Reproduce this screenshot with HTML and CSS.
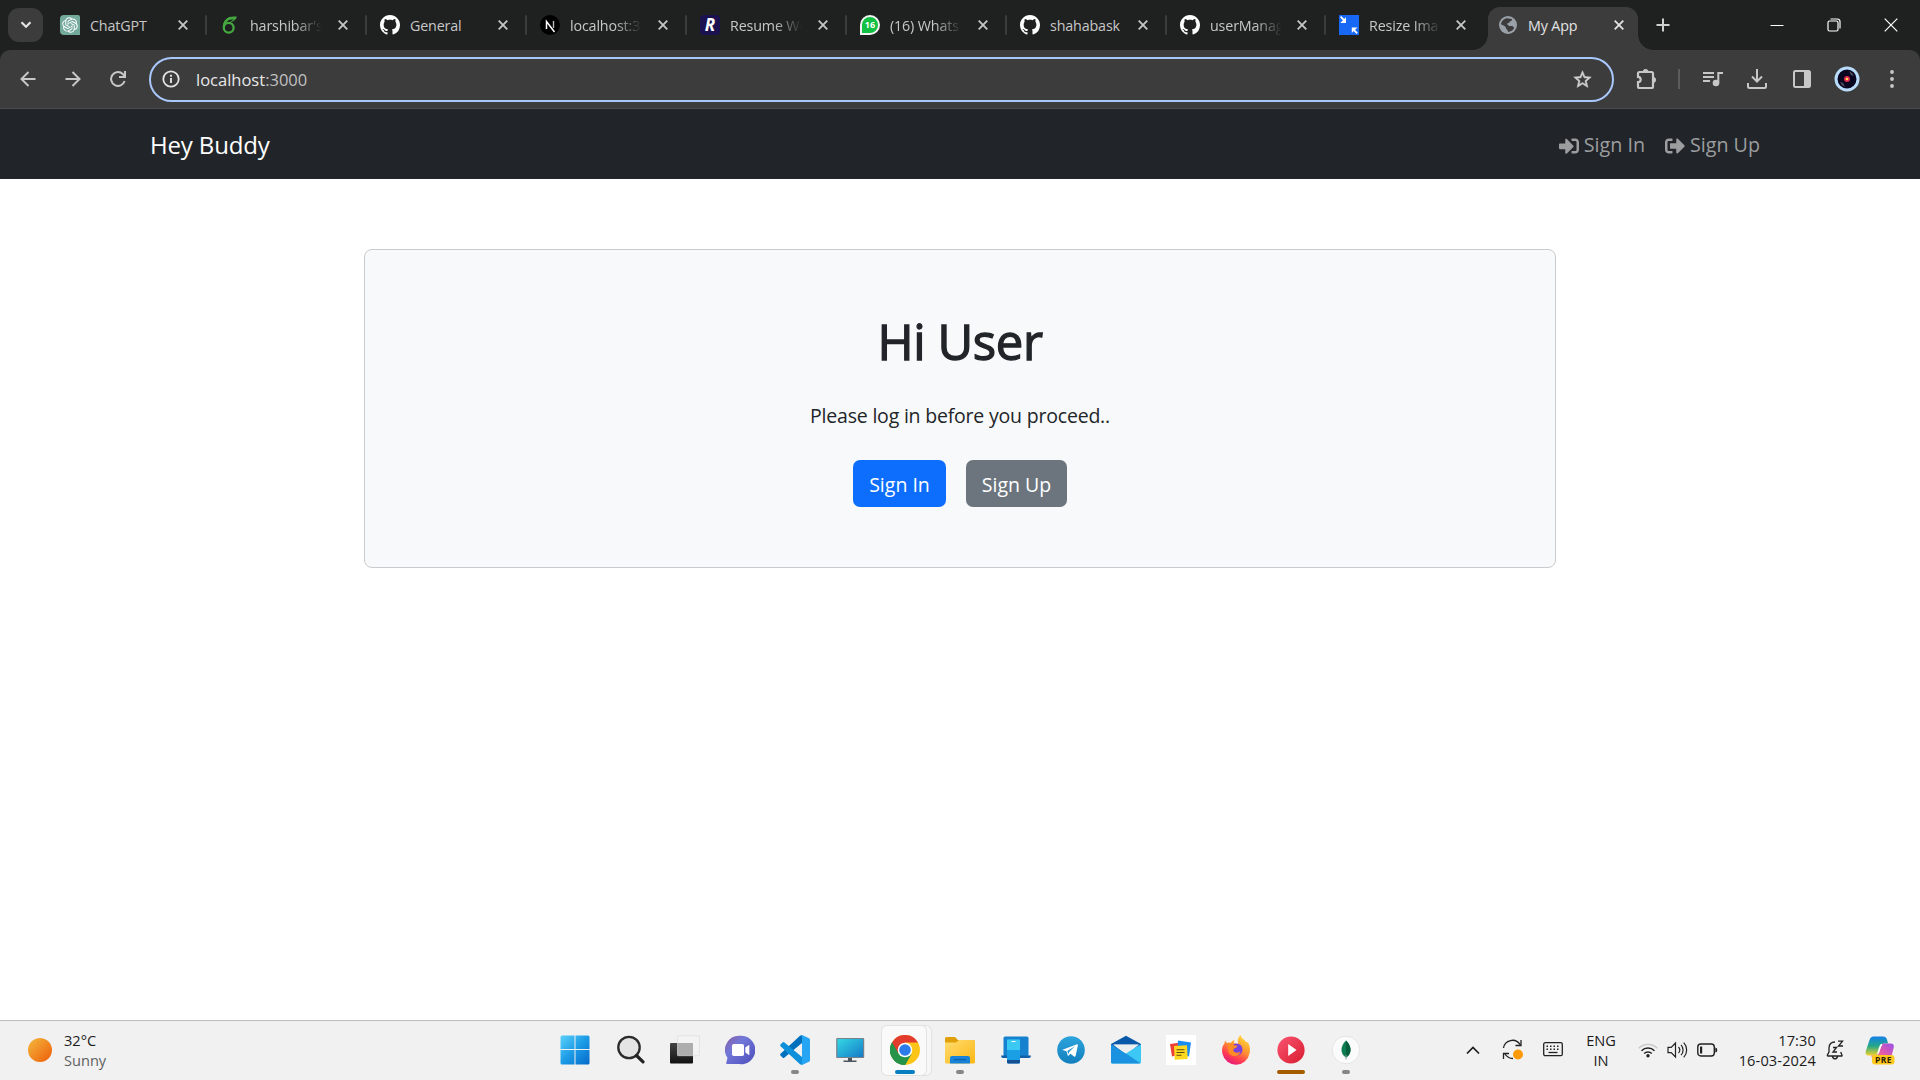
FILE: index.html
```html
<!DOCTYPE html>
<html lang="en">
<head>
<meta charset="utf-8">
<title>My App</title>
<link rel="stylesheet" href="styles.css">
</head>
<body>
<svg class="defs" width="0" height="0">
  <defs>
    <symbol id="github" viewBox="0 0 16 16"><path fill="#fff" d="M8 0C3.58 0 0 3.58 0 8c0 3.54 2.290 6.530 5.470 7.590.4.070.55-.17.55-.38 0-.19-.01-.82-.01-1.490-2.010.37-2.530-.49-2.690-.94-.09-.23-.48-.94-.82-1.130-.28-.15-.68-.52-.01-.53.63-.01 1.080.58 1.230.82.72 1.210 1.870.87 2.330.66.070-.52.28-.87.51-1.070-1.780-.2-3.640-.89-3.640-3.950 0-.87.31-1.590.82-2.150-.08-.2-.36-1.020.08-2.120 0 0 .67-.21 2.200.82.64-.18 1.320-.27 2-.27s1.360.09 2 .27c1.530-1.040 2.200-.82 2.200-.82.44 1.100.16 1.920.08 2.120.51.56.82 1.270.82 2.150 0 3.070-1.870 3.750-3.650 3.950.29.25.54.73.54 1.480 0 1.070-.01 1.930-.01 2.200 0 .21.15.46.55.38A8.010 8.010 0 0 0 16 8c0-4.420-3.580-8-8-8z"/></symbol>
    <symbol id="close" viewBox="0 0 10 10"><path d="M.7.7l8.600 8.600M9.300.7L.7 9.300" stroke="currentColor" stroke-width="1.800" fill="none"/></symbol>
  </defs>
</svg>

<header class="tabstrip">
  <button class="tab-search"><svg width="12" height="8" viewBox="0 0 12 8"><path d="M1.500 1.200L6 5.700l4.500-4.500" fill="none" stroke="#e3e3e3" stroke-width="2.200"/></svg></button>
  <div class="tabs">
    <div class="tab"><svg class="fav" viewBox="0 0 20 20"><path fill="#74aa9c" d="M4 0h14a2 2 0 0 1 2 2v18H4a4 4 0 0 1-4-4V4a4 4 0 0 1 4-4z"/><g transform="translate(2.200 2.200) scale(.65)"><path fill="#fff" d="M22.282 9.821a5.985 5.985 0 0 0-.516-4.910 6.046 6.046 0 0 0-6.510-2.900A6.065 6.065 0 0 0 4.981 4.182a5.985 5.985 0 0 0-3.998 2.900 6.046 6.046 0 0 0 .743 7.097 5.980 5.980 0 0 0 .511 4.911 6.051 6.051 0 0 0 6.515 2.900A5.985 5.985 0 0 0 13.260 24a6.056 6.056 0 0 0 5.772-4.206 5.990 5.990 0 0 0 3.998-2.900 6.056 6.056 0 0 0-.748-7.073zM13.260 22.430a4.476 4.476 0 0 1-2.876-1.041l.142-.080 4.778-2.758a.795.795 0 0 0 .393-.681v-6.737l2.020 1.169a.071.071 0 0 1 .038.052v5.583a4.504 4.504 0 0 1-4.495 4.493zM3.600 18.304a4.471 4.471 0 0 1-.535-3.014l.142.085 4.783 2.759a.771.771 0 0 0 .781 0l5.843-3.369v2.332a.080.080 0 0 1-.033.062L9.740 19.950a4.500 4.500 0 0 1-6.140-1.646zM2.341 7.896a4.485 4.485 0 0 1 2.365-1.973V11.600a.766.766 0 0 0 .388.677l5.815 3.354-2.020 1.169a.076.076 0 0 1-.071 0l-4.830-2.787A4.504 4.504 0 0 1 2.341 7.872zm16.596 3.856l-5.833-3.387L15.119 7.200a.076.076 0 0 1 .071 0l4.830 2.791a4.494 4.494 0 0 1-.676 8.105v-5.678a.79.79 0 0 0-.407-.667zm2.011-3.023l-.142-.085-4.774-2.782a.776.776 0 0 0-.785 0L9.409 9.230V6.897a.066.066 0 0 1 .028-.061l4.830-2.787a4.500 4.500 0 0 1 6.680 4.660zM8.307 12.863l-2.020-1.164a.080.080 0 0 1-.038-.057V6.075a4.500 4.500 0 0 1 7.375-3.454l-.142.081L8.704 5.460a.795.795 0 0 0-.393.681zm1.097-2.365l2.602-1.500 2.607 1.500v2.999l-2.597 1.500-2.607-1.500z"/></g></svg><span class="label">ChatGPT</span><svg class="x"><use href="#close"/></svg></div>
    <div class="tab"><svg class="fav" viewBox="0 0 20 20"><circle cx="8.700" cy="12.800" r="4.900" fill="none" stroke="#46a840" stroke-width="2.300"/><path d="M3.900 12.500C3.700 8 6 4.500 11 2.600" fill="none" stroke="#46a840" stroke-width="2.300"/><path d="M7.500 3.600C10 1.300 14 1.600 16.800 1.500 16.500 4.500 13.500 6.800 9 7.600c2-1.300 3.500-2.300 4.500-3.700-2 .9-4 1.200-6-.3z" fill="#46a840"/></svg><span class="label fade">harshibar's</span><svg class="x"><use href="#close"/></svg></div>
    <div class="tab"><svg class="fav"><use href="#github"/></svg><span class="label">General</span><svg class="x"><use href="#close"/></svg></div>
    <div class="tab"><svg class="fav" viewBox="0 0 20 20"><circle cx="10" cy="10" r="10"/><path d="M6.500 14V6.500l8 10.500" fill="none" stroke="#fff" stroke-width="1.500"/><path d="M13.500 6v7" stroke="#bbb" stroke-width="1.400"/></svg><span class="label fade">localhost:3</span><svg class="x"><use href="#close"/></svg></div>
    <div class="tab"><span class="fav fav-r">R</span><span class="label fade">Resume We</span><svg class="x"><use href="#close"/></svg></div>
    <div class="tab"><span class="fav fav-wa">16</span><span class="label fade">(16) Whats</span><svg class="x"><use href="#close"/></svg></div>
    <div class="tab"><svg class="fav"><use href="#github"/></svg><span class="label">shahabask</span><svg class="x"><use href="#close"/></svg></div>
    <div class="tab short"><svg class="fav"><use href="#github"/></svg><span class="label fade">userManag</span><svg class="x"><use href="#close"/></svg></div>
    <div class="tab short last"><svg class="fav" viewBox="0 0 20 20"><path fill="#1769f5" d="M0 0h20v20H0z"/><path d="M1 2.200L2.200 1l3 3L7 2.200V8H1.300L3.800 5.200zM18.800 17.800L17.600 19l-3-3L12.800 18v-5.500h5.800L16 14.800z" fill="#fff"/></svg><span class="label fade">Resize Ima</span><svg class="x"><use href="#close"/></svg></div>
    <div class="tab active"><svg class="fav globe" viewBox="0 0 18 18"><circle cx="9" cy="9" r="9" fill="#9aa0a8"/><path d="M9 2.200c2 .8 3.400.2 4.200 1.200-.2 1.600-2.200 1.200-2.600 2.600-.3 1.300-1.900.7-2.400 1.800-.3 1 1.300 1.200 1.900 2.200h3.200c.9 0 .5 1.400 2 1.500-.8 2.600-3.400 4.300-6.400 4.500.2-1.300-.4-2-1.300-2.700-.9-.8-.2-2.100-1.600-2.900C4.900 9.800 3 9 2 8.300 2.300 4.800 5.500 2 9 2.200z" fill="#3c3c3c"/></svg><span class="label">My App</span><svg class="x"><use href="#close"/></svg></div>
  </div>
  <svg class="newtab" width="14" height="14" viewBox="0 0 14 14"><path d="M7 .5v13M.5 7h13" stroke="#d0d0d0" stroke-width="2"/></svg>
  <div class="winctl">
    <svg width="14" height="14" viewBox="0 0 14 14"><path d="M.5 7.500h13" stroke="#fff"/></svg>
    <svg width="14" height="14" viewBox="0 0 14 14" fill="none" stroke="#fff" stroke-width="1.200"><rect x="1" y="3" width="10" height="10" rx="1.500"/><path d="M3.500 1h7A2.500 2.500 0 0 1 13 3.500v7"/></svg>
    <svg width="14" height="14" viewBox="0 0 14 14"><path d="M.7.7l12.600 12.600M13.300.7L.7 13.300" stroke="#fff" stroke-width="1.200"/></svg>
  </div>
</header>

<div class="toolbar-wrap">
<div class="toolbar">
  <div class="navbtns">
    <svg width="16" height="16" viewBox="0 0 16 16" fill="none" stroke="#c7c7c7" stroke-width="2"><path d="M15.500 8H2M8.500 1L1.500 8l7 7"/></svg>
    <svg width="16" height="16" viewBox="0 0 16 16" fill="none" stroke="#c7c7c7" stroke-width="2"><path d="M.5 8H14M7.500 1l7 7-7 7"/></svg>
    <svg width="16" height="16" viewBox="0 0 16 16" fill="none" stroke="#c7c7c7" stroke-width="2"><path d="M14.600 10A6.900 6.900 0 1 1 13 3.200L15 5.500M15 0v5.900H9"/></svg>
  </div>
  <div class="omnibox">
    <svg width="18" height="18" viewBox="0 0 18 18"><circle cx="9" cy="9" r="7.700" fill="none" stroke="#e3e3e3" stroke-width="1.800"/><path d="M9 8v5M9 4.800v1.900" stroke="#e3e3e3" stroke-width="1.900"/></svg>
    <span class="url"><span>localhost</span><i>:3000</i></span>
    <svg class="star" width="21" height="21" viewBox="0 0 24 24"><path fill="#d0d0d0" d="M22 9.240l-7.190-.62L12 2 9.190 8.630 2 9.240l5.460 4.730L5.820 21 12 17.270 18.180 21l-1.630-7.030L22 9.240zM12 15.400l-3.760 2.270 1-4.280-3.320-2.880 4.380-.38L12 6.100l1.710 4.040 4.380.38-3.320 2.880 1 4.280L12 15.400z" stroke="#d0d0d0" stroke-width=".6"/></svg>
  </div>
  <div class="actions">
    <svg class="ext" width="22" height="22" viewBox="0 0 22 22"><path d="M7.500 4H4.500Q3 4 3 5.500v3.300a2.700 2.700 0 0 1 0 5.400v4Q3 20 4.500 20h12q1.500 0 1.500-1.500V5.500Q18 4 16.500 4z" fill="none" stroke="#c7c7c7" stroke-width="2.200"/><path d="M8 4a2.600 2.600 0 0 1 5.200 0zM18 9.300a2.600 2.600 0 0 1 0 5.200z" fill="#c7c7c7" stroke="#c7c7c7"/></svg>
    <i class="divider"></i>
    <svg class="media" width="22" height="18" viewBox="0 0 22 18"><path d="M1 3h11M1 7h11M1 11h7" stroke="#c7c7c7" stroke-width="1.800"/><path d="M16.300 13V3H21" fill="none" stroke="#c7c7c7" stroke-width="2"/><circle cx="14" cy="13" r="3.300" fill="#c7c7c7"/></svg>
    <svg class="dl" width="22" height="22" viewBox="0 0 22 22" fill="none" stroke="#c7c7c7" stroke-width="2"><path d="M11 1v12M6 8.500l5 5 5-5M2 15v3.500Q2 20 3.500 20h15q1.500 0 1.500-1.500V15"/></svg>
    <svg class="panel" width="20" height="20" viewBox="0 0 20 20"><rect x="2" y="2" width="16" height="16" rx="1.500" fill="none" stroke="#c7c7c7" stroke-width="2"/><path d="M12 2h6v16h-6z" fill="#c7c7c7"/></svg>
    <svg class="avatar" width="26" height="26" viewBox="0 0 26 26"><circle cx="13" cy="13" r="11" fill="#080620" stroke="#b9dcfb" stroke-width="3"/><path d="M15 5a9 9 0 0 1 5 5l-3-1zM6 16a9 9 0 0 0 5 5l-2-4z" fill="#565463"/><circle cx="13" cy="13" r="3" fill="#e3264f"/><circle cx="13" cy="13" r="1.300" fill="#ffd34d"/></svg>
    <svg class="menu" width="6" height="20" viewBox="0 0 6 20" fill="#c7c7c7"><circle cx="3" cy="3" r="1.900"/><circle cx="3" cy="10" r="1.900"/><circle cx="3" cy="17" r="1.900"/></svg>
  </div>
</div>
</div>

<nav class="navbar">
  <a class="brand">Hey Buddy</a>
  <div class="links">
    <a><svg width="20" height="20" viewBox="0 0 512 512"><path d="M416 448h-84c-6.600 0-12-5.400-12-12v-40c0-6.600 5.400-12 12-12h84c17.700 0 32-14.300 32-32V160c0-17.700-14.300-32-32-32h-84c-6.600 0-12-5.400-12-12V76c0-6.600 5.400-12 12-12h84c53 0 96 43 96 96v192c0 53-43 96-96 96zm-47-201L201 79c-15-15-41-4.500-41 17v96H24c-13.300 0-24 10.700-24 24v96c0 13.300 10.700 24 24 24h136v96c0 21.500 26 32 41 17l168-168c9.300-9.400 9.300-24.600 0-34z"/></svg><span>Sign In</span></a>
    <a><svg width="20" height="20" viewBox="0 0 512 512"><path d="M497 273L329 441c-15 15-41 4.500-41-17v-96H152c-13.300 0-24-10.700-24-24v-96c0-13.300 10.700-24 24-24h136V88c0-21.400 25.900-32 41-17l168 168c9.300 9.400 9.300 24.600 0 34zM192 436v-40c0-6.600-5.400-12-12-12H96c-17.700 0-32-14.300-32-32V160c0-17.700 14.300-32 32-32h84c6.600 0 12-5.400 12-12V76c0-6.600-5.400-12-12-12H96c-53 0-96 43-96 96v192c0 53 43 96 96 96h84c6.600 0 12-5.400 12-12z"/></svg><span>Sign Up</span></a>
  </div>
</nav>

<main class="page">
  <section class="card">
    <h1>Hi User</h1>
    <p>Please log in before you proceed..</p>
    <div class="buttons"><button class="btn primary">Sign In</button><button class="btn secondary">Sign Up</button></div>
  </section>
</main>

<footer class="taskbar">
  <div class="weather"><i class="sun"></i><div><div class="temp">32°C</div><div class="cond">Sunny</div></div></div>
  <div class="apps">
    <div class="app"><svg viewBox="0 0 30 30"><defs><linearGradient id="win" x1="0" y1="0" x2="30" y2="30" gradientUnits="userSpaceOnUse"><stop offset="0" stop-color="#5dd3fb"/><stop offset=".5" stop-color="#1c9be6"/><stop offset="1" stop-color="#0568c8"/></linearGradient></defs><path fill="url(#win)" d="M2 .5h12.500V14H.5V2Q.5.5 2 .5zM15.500.5H28Q29.500.5 29.500 2v12h-14zM.5 15h14v14.500H2Q.5 29.500.5 28zM15.500 15h14v13q0 1.500-1.500 1.500H15.500z"/></svg></div>
    <div class="app"><svg viewBox="0 0 30 30"><circle cx="14" cy="12.500" r="10.700" fill="#e4e4e4" stroke="#2b2b2b" stroke-width="2.300"/><path d="M21.500 20.500l6.500 6.300" stroke="#222" stroke-width="3.200" stroke-linecap="round"/></svg></div>
    <div class="app"><svg viewBox="0 0 30 30"><defs><linearGradient id="tv" x2="0" y2="1"><stop stop-color="#444"/><stop offset="1" stop-color="#111"/></linearGradient></defs><rect x="0" y="8" width="23" height="20.500" rx="1" fill="url(#tv)"/><rect x="7.500" y=".7" width="22" height="20" rx="1" fill="#f4f4f4" fill-opacity=".8" stroke="#ddd" stroke-width=".7"/><path d="M7.500 8H23v12.700H7.500z" fill="#adadad"/></svg></div>
    <div class="app"><svg viewBox="0 0 30 30"><defs><linearGradient id="chat" x1="0" y1="0" x2="1" y2="1"><stop offset="0" stop-color="#8b5a9e"/><stop offset=".35" stop-color="#7278d8"/><stop offset="1" stop-color="#4d4dbb"/></linearGradient></defs><path d="M15 .8a14.200 14.200 0 1 1-1 28.200H2q-1.300-.3-.7-1.500L2.500 23A14.200 14.200 0 0 1 15 .8z" fill="url(#chat)"/><rect x="7" y="9" width="12" height="12" rx="1.800" fill="#fff"/><path d="M20.300 12.500l4-2.700v10.400l-4-2.700z" fill="#fff"/></svg></div>
    <div class="app run"><svg viewBox="0 0 30 30"><path d="M22 0v8L4.500 22.500Q3.500 23.500 2.500 22.500L.5 20.500Q-.3 19.500.8 18.500L20 .8z" fill="#0070bd"/><path d="M22 30v-8L4.500 7.500Q3.500 6.500 2.500 7.500L.5 9.500Q-.3 10.500.8 11.500L20 29.200z" fill="#0d8fda"/><path d="M20.800.2L22 0l7 3.200q1 .5 1 1.500v20.600q0 1-1 1.500L22 30l-1.200-.2Q22 30 22 28V2Q22 0 20.800.2z" fill="#25a5f3"/></svg></div>
    <div class="app"><svg viewBox="0 0 30 30"><defs><linearGradient id="pc" x1="0" y1="0" x2="1" y2="1"><stop offset="0" stop-color="#35dae4"/><stop offset="1" stop-color="#1478c8"/></linearGradient></defs><rect x="1.800" y="3.500" width="26.800" height="19" rx=".6" fill="url(#pc)" stroke="#77818c" stroke-width="1.200"/><path d="M13 23h4v2.500h4.500V27h-13v-1.500H13z" fill="#4c545d"/></svg></div>
    <div class="app current"><svg viewBox="0 0 30 30"><circle cx="15" cy="15" r="15" fill="#fcc417"/><path d="M15 15L2 7.500A15 15 0 0 1 28 7.500H15z" fill="#e33b2e"/><path d="M2 7.500A15 15 0 0 0 15 30l6.500-11.300L15 15z" fill="#259348"/><path d="M2 7.500L8.500 18.700 15 15V7.500z" fill="#e33b2e"/><path d="M2 7.500A15 15 0 0 0 15 30l6.500-11.200a7.500 7.500 0 0 1-13 0z" fill="#259348"/><circle cx="15" cy="15" r="7.300" fill="#fff"/><circle cx="15" cy="15" r="5.800" fill="#2b7bea"/></svg></div>
    <div class="app run"><svg viewBox="0 0 30 30"><defs><linearGradient id="fold" x1="0" y1="0" x2="1" y2="1"><stop stop-color="#ffdc70"/><stop offset="1" stop-color="#fcb713"/></linearGradient></defs><path d="M0 3.500Q0 2 1.500 2H10l3 3h15q2 0 2 2v4H0z" fill="#dfa009"/><path d="M0 7.500h11L14 5h14.500Q30 5 30 6.500V27q0 1.500-1.500 1.500h-27Q0 28.500 0 27z" fill="url(#fold)"/><path d="M5 28.500V23q0-2 2-2h16q2 0 2 2v5.500z" fill="#1683d8"/><path d="M9 24.700h12" stroke="#0b579d"/></svg></div>
    <div class="app"><svg viewBox="0 0 30 30"><path d="M4 1.500h22q1.500 0 1.500 1.500v19h-25V3Q2.500 1.500 4 1.500z" fill="#1681ce"/><path d="M0 20.500h30Q30 23 28 23H2q-2 0-2-2.500z" fill="#1261a8"/><path d="M6 6q0-1.500 1.500-1.500h10Q19 4.500 19 6v21q0 1.500-1.500 1.500h-10Q6 28.500 6 27z" fill="#1a9fe4"/><path d="M6 5q0-.5.5-.5h12q.5 0 .5.500v10H6z" fill="#3bc8f3"/><path d="M6 25h13v2q0 1.500-1.500 1.500h-10Q6 28.500 6 27z" fill="#164e92"/><path d="M10.500 6.500h4" stroke="#fff"/></svg></div>
    <div class="app"><svg viewBox="0 0 30 30"><defs><linearGradient id="tg" x2="0" y2="1"><stop stop-color="#2ba4dc"/><stop offset="1" stop-color="#137fbd"/></linearGradient></defs><circle cx="15" cy="15" r="13.800" fill="url(#tg)"/><path d="M6.500 14.800L21 9.300q1-.2.900 1L19.600 21q-.4 1.200-1.500.5l-3.700-2.700-1.900 1.900q-.6.400-.8-.4l-1.200-4-3.900-1.200q-.7-.2-.1-.3zM11.300 16l7.500-4.700-5.700 5.700-.7 2.300z" fill="#fff" fill-rule="evenodd"/></svg></div>
    <div class="app"><svg viewBox="0 0 30 30"><path d="M0 9L15 .8 30 9v7H0z" fill="#0a59a8"/><path d="M2 9.500h26L15.500 20z" fill="#f1f1f1"/><path d="M30 9.300V27q0 1.500-1.500 1.500h-27Q0 28.500 0 27z" fill="#3cc7f5"/><path d="M0 9.300l15 9.200L29 28q-.3.500-1 .5H1.500Q0 28.500 0 27z" fill="#1b92df"/><path d="M3 9.800h24L15 18.500z" fill="#eee"/></svg></div>
    <div class="app"><svg viewBox="0 0 30 30"><path fill="#fff" d="M0 0h30v30H0z"/><path d="M4 9l11-1.500 2 11-11 3z" fill="#ee3f37"/><path d="M12 5.500l13 2-2 14-12-2z" fill="#1a8df2"/><path d="M8 11l13-.8.7 13.800-13 .7z" fill="#ffd91f"/><path d="M10.500 14.700h8M10.500 17.500h8M10.500 20.200h5" stroke="#5e4b13" stroke-width="1.100"/></svg></div>
    <div class="app"><svg viewBox="0 0 30 30"><defs><linearGradient id="ff" x1=".8" y1="0" x2=".3" y2="1"><stop stop-color="#ffdf3c"/><stop offset=".45" stop-color="#ff9330"/><stop offset=".75" stop-color="#ff3b52"/><stop offset="1" stop-color="#e2197f"/></linearGradient></defs><path d="M4 5.500L6 8q2-.7 4-.3 1-2 3.500-2.700L13 8l4 1Q16 3 19.500 0q.5 3 4 5l1.500 2 2 .5q3 5 1.500 11A13.800 13.800 0 0 1 1.500 19Q0 12 3.500 8.500z" fill="url(#ff)"/><circle cx="15.500" cy="14.500" r="6" fill="#7a42dd"/><path d="M7 8.500q4-1 6.500 2h3q-.5 2.500-3.500 3-1.500 2 .5 3.500 3 1.500 6-.5-2 5.500-7.500 4.500Q7 19.500 7 14z" fill="#ff8b27"/></svg></div>
    <div class="app attention"><svg viewBox="0 0 30 30"><defs><linearGradient id="play" x1="0" y1="0" x2="1" y2="1"><stop stop-color="#fb5573"/><stop offset="1" stop-color="#d81c2e"/></linearGradient></defs><circle cx="15" cy="15" r="13.600" fill="url(#play)"/><path d="M12.200 9v12l8.300-6z" fill="#fff"/></svg></div>
    <div class="app run"><svg viewBox="0 0 30 30"><circle cx="15" cy="15" r="13.800" fill="#fbfbfb" stroke="#e0e0e0" stroke-width=".8"/><path d="M15 5.500q4.500 4.500 4.500 9.500T15 22.500q-4.500-2.500-4.500-7.500T15 5.500z" fill="#0d7d50"/><path d="M15 5.500q4.500 4.500 4.500 9.500T15 22.500z" fill="#075f3c"/><path d="M15 20v4.500" stroke="#8ba898"/></svg></div>
  </div>
  <div class="tray">
    <svg class="i-chev" width="14" height="10" viewBox="0 0 14 10"><path d="M1 8.500l6-6 6 6" fill="none" stroke="#1b1b1b" stroke-width="1.700"/></svg>
    <svg class="i-sync" width="22" height="22" viewBox="0 0 22 22"><path d="M1.500 9A9 9 0 0 1 18 5.500M19 1v5.500h-5.500M11 19.500a9.500 9.500 0 0 1-8-4.500M1.500 20v-5.500H7" fill="none" stroke="#222" stroke-width="1.300"/><circle cx="16" cy="15.500" r="5" fill="#fc9a08"/></svg>
    <svg class="i-kbd" width="20" height="15" viewBox="0 0 20 15"><rect x=".7" y=".7" width="18.600" height="13" rx="1.500" fill="none" stroke="#222" stroke-width="1.300"/><path d="M3.500 4.200h14M3.500 7.200h14" stroke="#222" stroke-width="1.400" stroke-dasharray="1.500 2"/><path d="M5.500 10.500h9" stroke="#222" stroke-width="1.300"/></svg>
    <div class="lang"><div>ENG</div><div>IN</div></div>
    <svg class="i-wifi" width="20" height="16" viewBox="0 0 20 16"><path d="M.8 6.200a13 13 0 0 1 18.400 0" fill="none" stroke="#c5c5c5" stroke-width="1.300"/><path d="M3.500 8.700a9.300 9.300 0 0 1 13 0M6.200 11.500a5.500 5.500 0 0 1 7.600 0" fill="none" stroke="#222" stroke-width="1.500"/><circle cx="10" cy="13.700" r="1.700" fill="#222"/></svg>
    <svg class="i-vol" width="21" height="18" viewBox="0 0 21 18" fill="none" stroke="#222" stroke-width="1.200"><path d="M1 6.300h3.200L8.500 2v14l-4.300-4.300H1zM11.500 6a4.500 4.500 0 0 1 0 6M14 3.800a7.500 7.500 0 0 1 0 10.400M16.700 1.700a10.500 10.500 0 0 1 0 14.600"/></svg>
    <svg class="i-bat" width="21" height="14" viewBox="0 0 21 14"><rect x=".8" y="1" width="16.500" height="12" rx="3" fill="none" stroke="#222" stroke-width="1.400"/><path d="M3 3.500h2.200v7H3zM18.300 4.500q2 0 2 2.500t-2 2.500z" fill="#222"/></svg>
    <div class="clock"><div>17:30</div><div>16-03-2024</div></div>
    <svg class="i-bell" width="18" height="20" viewBox="0 0 18 20" fill="none" stroke="#222" stroke-width="1.300"><path d="M9 2Q3.200 2 3 8v4l-1.700 3.200q0 .8.700.8h13.500q.8 0 .5-.8L14.700 12M6.500 16.500q.5 2.300 2.500 2.300t2.500-2.300M12 1.200h4.500L12.500 6h4.500M7 7.500h3.500L7 12h4"/></svg>
    <svg class="i-cop" width="30" height="30" viewBox="0 0 30 30"><defs><linearGradient id="c1" x2="0" y2="1"><stop stop-color="#1580e8"/><stop offset=".5" stop-color="#23a789"/><stop offset="1" stop-color="#f3d32a"/></linearGradient><linearGradient id="c2" x1="1" y1="0" x2="0" y2="1"><stop stop-color="#9a50ea"/><stop offset=".5" stop-color="#e35ba9"/><stop offset="1" stop-color="#ff8b4f"/></linearGradient></defs><path d="M8.500 1.500H18q3 0 4 3l1 4h-3.500q-3 0-4 3L13 18q-1 2.500-4 2.500H4q-4.500 0-3-5L4.500 5Q5.500 1.500 8.500 1.500z" fill="url(#c1)"/><path d="M18 8.500h7.500q4.500 0 3 5L26 23q-1 4-4 4H11q-3 0-4-4l-.7-2.500H10q3 0 4-3l2.500-7z" fill="url(#c2)"/><path d="M17 9.500Q15.500 10 15 12l-2 6.500" stroke="#fff" stroke-width="1.700" fill="none"/><rect x="7" y="20" width="22.500" height="9.500" rx="3" fill="#ffc91f"/><text x="18.200" y="27.800" text-anchor="middle" class="pre" textLength="16.500">PRE</text></svg>
  </div>
</footer>
</body>
</html>
```
FILE: styles.css
```css
* { box-sizing: border-box; }
body {
  margin: 0;
  width: 1920px;
  height: 1080px;
  display: flex;
  flex-direction: column;
  overflow: hidden;
  background: #fff;
  color: #212529;
  font-family: "Open Sans", "Noto Sans", sans-serif;
}
svg { display: block; flex: none; }
button { font: inherit; border: 0; padding: 0; }
.defs { position: absolute; }

/* Tab strip */
.tabstrip { height: 50px; background: #1f2020; display: flex; align-items: center; padding-left: 8px; flex: none; }
.tab-search { width: 35px; height: 34px; border-radius: 11px; background: #3c3c3c; display: grid; place-items: center; margin-right: 3px; }
.tabs { display: flex; align-self: stretch; }
.tab { width: 160px; display: flex; align-items: center; padding: 0 18px 0 14px; position: relative; color: #c7c7c7; }
.tab.short { width: 159px; }
.tab::after { content: ""; position: absolute; right: -1px; top: 15px; width: 2px; height: 20px; background: #3c3c3c; border-radius: 1px; }
.tab.last::after { display: none; }
.fav { width: 20px; height: 20px; flex: none; margin-right: 10px; }
.fav-r { background: #1b1150; border-radius: 4px; color: #fff; font: italic bold 17px/20px "Open Sans", sans-serif; text-align: center; }
.fav-wa { background: #12c143; border: 2px solid #f4f4f4; border-radius: 10px 10px 10px 0; color: #fff; font: bold 9px/16px "Open Sans", sans-serif; text-align: center; }
.label { flex: 1; font-size: 14.300px; white-space: nowrap; height: 24px; line-height: 26px; letter-spacing: -.15px; }
.tab .label { margin-right: 16px; min-width: 0; }
.fade { -webkit-mask-image: linear-gradient(90deg, #000 45px, transparent 72px); mask-image: linear-gradient(90deg, #000 45px, transparent 72px); }
.x { width: 10px; height: 10px; }
.tab.active { width: 150px; height: 43px; margin: 7px 0 0 4px; padding: 0 14px 7px 11px; background: #3c3c3c; border-radius: 12px 12px 0 0; color: #e3e3e3; }
.tab.active::before, .tab.active::after { content: ""; position: absolute; top: auto; bottom: 0; width: 15px; height: 15px; border-radius: 0; }
.tab.active::before { left: -15px; background: radial-gradient(circle at 0 0, transparent 14.500px, #3c3c3c 15px); }
.tab.active::after { right: -15px; background: radial-gradient(circle at 100% 0, transparent 14.500px, #3c3c3c 15px); }
.globe { width: 18px; height: 18px; margin-right: 11px; }
.newtab { margin-left: 18px; }
.winctl { display: flex; gap: 43px; margin-left: auto; margin-right: 22px; }

/* Toolbar */
.toolbar-wrap { background: #1f2020; flex: none; }
.toolbar { height: 59px; background: #3c3c3c; border-bottom: 1px solid #4a4a4a; border-radius: 10px 10px 0 0; display: flex; align-items: center; }
.navbtns { display: flex; gap: 29px; margin-left: 20px; width: 129px; }
.omnibox { width: 1465px; height: 45px; border: 2px solid #a8c7fa; border-radius: 23px; display: flex; align-items: center; padding: 0 19px 0 11px; }
.url { margin-left: 16px; flex: 1; font-size: 16.500px; color: #e8e8e8; }
.url i { font-style: normal; color: #c0c0c0; }
.actions { display: flex; align-items: center; }
.ext { margin: 0 21px; }
.divider { width: 2px; height: 20px; background: #5c5c5c; }
.media { margin: 0 22px; }
.panel { margin: 0 22px 0 24px; }
.menu { margin-left: 29px; }

/* Site navbar */
.navbar { height: 70px; flex: none; background: #212529; display: flex; align-items: center; justify-content: space-between; padding: 0 160px 0 150px; }
.brand { color: #fff; font-size: 24px; letter-spacing: -.15px; }
.links { display: flex; gap: 20px; color: #9b9d9e; font-size: 19.700px; }
.links a { display: flex; align-items: center; gap: 5px; }
.links svg { fill: #9b9d9e; margin-top: 4px; }

/* Welcome card */
.page { flex: 1; display: flex; justify-content: center; align-items: flex-start; padding-top: 70px; }
.card { width: 1192px; height: 319px; border: 1px solid #c8cacd; border-radius: 8px; background: #f8f9fa; display: flex; flex-direction: column; align-items: center; padding-top: 61px; }
h1 { margin: 0; font-size: 49px; font-weight: 400; line-height: 60px; letter-spacing: -.4px; -webkit-text-stroke: 1.300px #212529; }
p { margin: 30px 0 0; font-size: 19.500px; line-height: 30px; letter-spacing: -.2px; }
.buttons { display: flex; gap: 20px; margin-top: 29px; }
.btn { height: 47px; width: 93px; border-radius: 7px; color: #fff; font-size: 19.500px; padding-top: 2px; }
.primary { background: #0d6efd; }
.secondary { background: #6c757d; width: 101px; }

/* Taskbar */
.taskbar { height: 60px; flex: none; background: #f1f1f1; border-top: 1px solid #bdbdbd; display: grid; grid-template-columns: 547px 827px 1fr; color: #1b1b1b; font-size: 14.600px; line-height: 20px; padding-bottom: 2px; }
.weather { display: flex; align-items: center; padding-left: 28px; gap: 12px; }
.sun { width: 24px; height: 24px; border-radius: 50%; background: linear-gradient(135deg, #f3b13a 10%, #ef6a10 85%); }
.cond { color: #5f5f5f; }
.apps { display: grid; grid-template-columns: repeat(15, 1fr); }
.app { display: grid; place-items: center; position: relative; }
.app svg { width: 30px; height: 30px; position: relative; }
.run::after, .current::after, .attention::after { content: ""; position: absolute; left: calc(50% - 4px); top: 49px; width: 8px; height: 4px; border-radius: 2px; background: #868686; }
.current::after { left: calc(50% - 10px); width: 20px; background: #067ec0; }
.attention::after { left: calc(50% - 14px); width: 28px; background: #a35c00; }
.current::before { content: ""; position: absolute; left: 4px; top: 5px; width: 44px; height: 49px; border-radius: 5px; background: #fafafa; box-shadow: 0 0 0 1px #e2e2e2, 5px 0 0 0 #f7f7f7, 5px 0 0 1px #e2e2e2; }
.tray { display: flex; align-items: center; padding-left: 92px; }
.i-sync { margin-left: 22px; }
.i-kbd { margin-left: 19px; }
.lang { text-align: center; width: 36px; margin-left: 20px; padding-top: 1px; }
.i-wifi { margin-left: 19px; }
.i-vol { margin-left: 9px; }
.i-bat { margin-left: 9px; }
.clock { text-align: right; margin-left: 13px; width: 85px; letter-spacing: .12px; }
.i-bell { margin-left: 10px; }
.i-cop { margin-left: 21px; }
.pre { font: bold 8.500px "Open Sans", sans-serif; fill: #2b2000; }
```
